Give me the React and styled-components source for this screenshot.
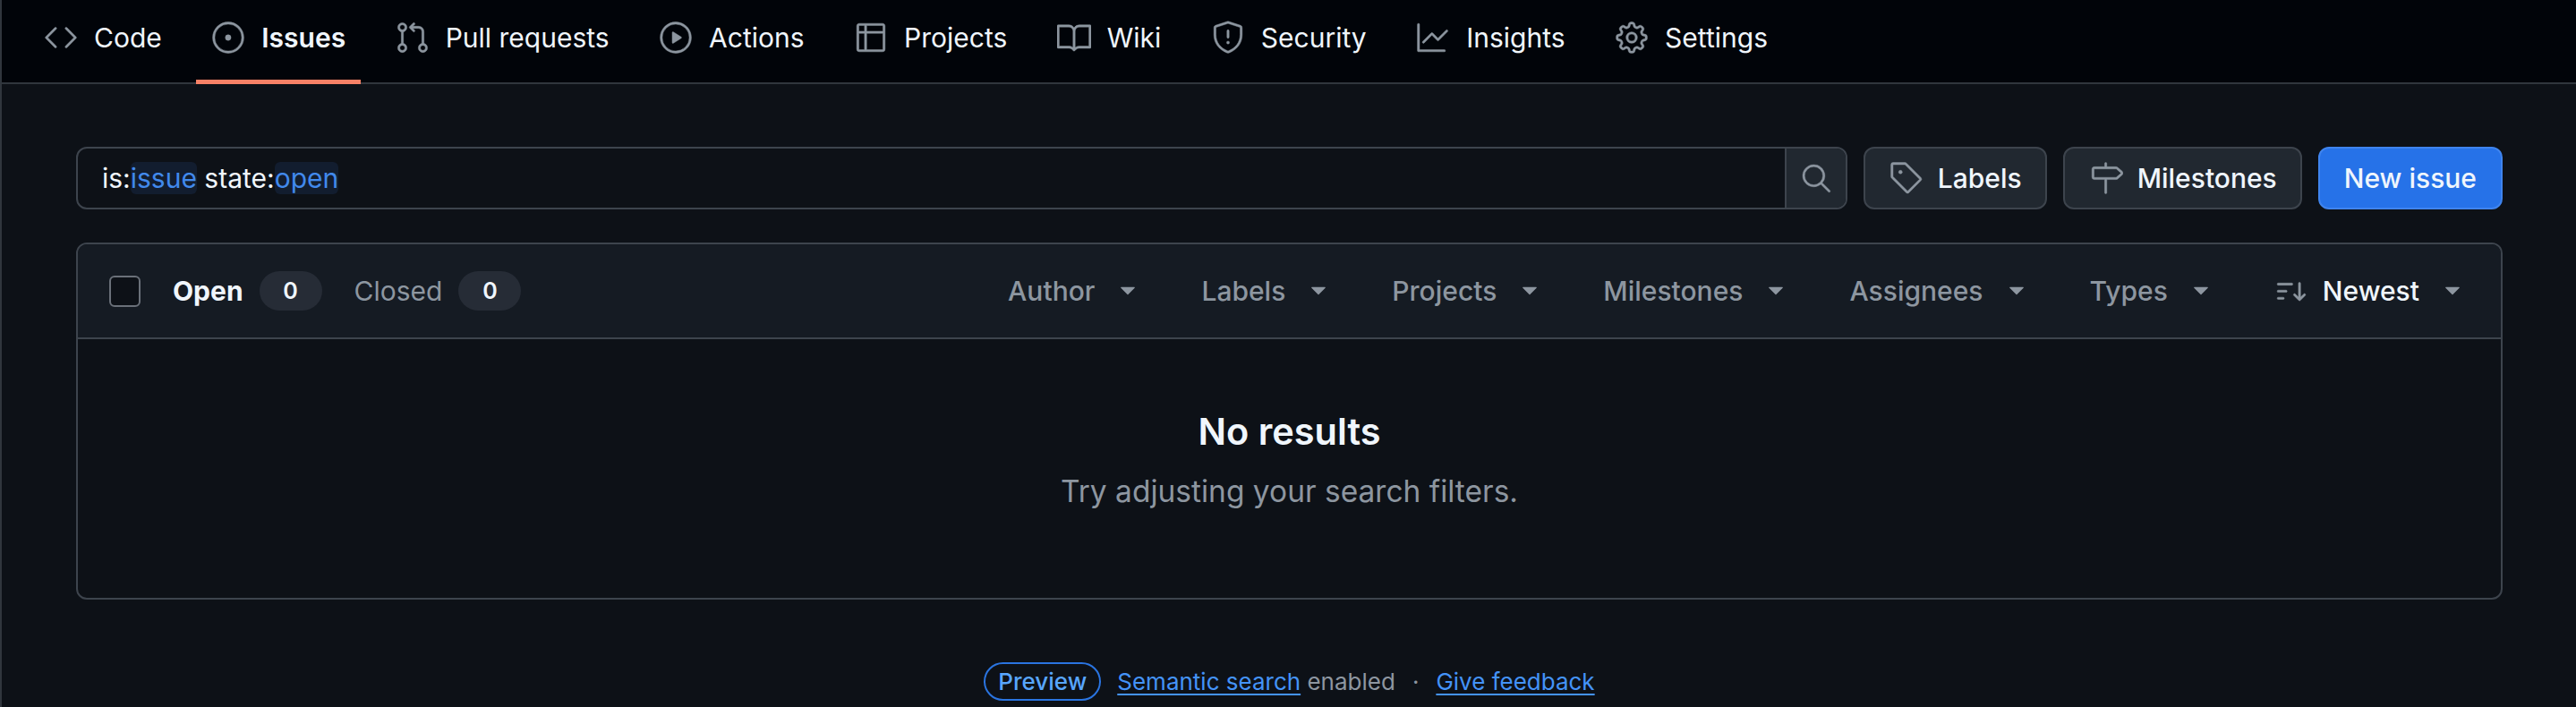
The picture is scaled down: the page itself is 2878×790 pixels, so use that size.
import React from 'react';
import styled, { createGlobalStyle } from 'styled-components';
import {
  GoCode, GoIssueOpened, GoGitPullRequest, GoPlay, GoTable, GoBook, GoShield,
  GoGraph, GoGear, GoSearch, GoTag, GoMilestone, GoSortDesc, GoTriangleDown,
} from 'react-icons/go';

const GlobalStyle = createGlobalStyle`
  html, body {
    margin: 0;
    background: #0d1117;
    color: #f0f6fc;
    font-family: Inter, "Noto Sans", sans-serif;
  }
  * { box-sizing: border-box; }
  svg {
    stroke: currentColor;
    stroke-width: 0.3;
  }
`;

const Page = styled.div`
  height: 790px;
  overflow: hidden;
  border-left: 2px solid #30363d;
`;

const Nav = styled.nav`
  display: flex;
  gap: 21.5px;
  height: 94px;
  padding-left: 30px;
  background: #010409;
  border-bottom: 2px solid #30363d;
`;

const Tab = styled.a`
  display: flex;
  align-items: center;
  gap: 18px;
  height: 94px;
  padding: 0 17px 5px;
  font-size: 30px;
  font-weight: ${p => (p.$active ? 600 : 400)};
  color: #f0f6fc;
  border-bottom: 5px solid ${p => (p.$active ? '#f78166' : 'transparent')};
  svg { color: #8d96a0; flex: none; }
`;

const Main = styled.main`
  padding: 70px 82px 0 83px;
`;

const SearchRow = styled.div`
  display: flex;
  gap: 18px;
  height: 70px;
`;

const SearchBar = styled.div`
  flex: 1;
  display: flex;
  border: 2px solid #3d444d;
  border-radius: 12px;
  overflow: hidden;
  background: #0d1117;
`;

const Query = styled.div`
  flex: 1;
  display: flex;
  align-items: center;
  padding-left: 27px;
  font-size: 30px;
  white-space: pre;
`;

const Token = styled.span`
  color: #4189ec;
  background: #121d2f;
  border-radius: 6px;
  height: 36px;
  line-height: 36px;
`;

const SearchButton = styled.div`
  width: 68px;
  display: flex;
  align-items: center;
  justify-content: center;
  background: #212830;
  border-left: 2px solid #3d444d;
  color: #8d96a0;
`;

const Button = styled.button`
  display: flex;
  align-items: center;
  gap: 16px;
  height: 70px;
  padding: ${p => (p.$primary ? '0 27px' : '0 26px 0 27px')};
  border: 2px solid ${p => (p.$primary ? '#3f84ee' : '#3d444d')};
  border-radius: 12px;
  background: ${p => (p.$primary ? '#2672e8' : '#212830')};
  color: #f0f6fc;
  font-family: inherit;
  font-size: 30px;
  font-weight: 500;
  svg { color: #8d96a0; }
`;

const Box = styled.section`
  margin-top: 37px;
  height: 399px;
  border: 2px solid #3d444d;
  border-radius: 12px;
  overflow: hidden;
  display: flex;
  flex-direction: column;
`;

const BoxHeader = styled.header`
  display: flex;
  align-items: center;
  height: 106px;
  padding: 0 39px 0 35px;
  flex: none;
  background: #151b23;
  border-bottom: 2px solid #3d444d;
`;

const Checkbox = styled.span`
  width: 35px;
  height: 35px;
  border: 2px solid #6a7079;
  border-radius: 6px;
  background: #0d1117;
  margin-right: 36px;
`;

const StateTab = styled.span`
  display: flex;
  align-items: center;
  gap: 18px;
  margin-right: 36px;
  font-size: 30px;
  font-weight: ${p => (p.$active ? 700 : 400)};
  color: ${p => (p.$active ? '#f0f6fc' : '#8d96a0')};
`;

const Count = styled.span`
  width: 70px;
  height: 44px;
  border-radius: 22px;
  background: #262c36;
  color: #f0f6fc;
  display: flex;
  align-items: center;
  justify-content: center;
  font-size: 25px;
  font-weight: 600;
`;

const Filters = styled.div`
  margin-left: auto;
  display: flex;
  align-items: center;
  gap: 67px;
`;

const Filter = styled.span`
  display: flex;
  align-items: center;
  gap: 22px;
  font-size: 30px;
  font-weight: 500;
  color: ${p => (p.$active ? '#f0f6fc' : '#8d96a0')};
  svg { color: #8d96a0; flex: none; stroke: none; }
`;

const SortLabel = styled.span`
  display: flex;
  align-items: center;
  gap: 16px;
  svg { stroke: currentColor; }
`;

const Empty = styled.div`
  flex: 1;
  display: flex;
  flex-direction: column;
  align-items: center;
  padding-top: 78px;
`;

const EmptyTitle = styled.h2`
  margin: 0;
  font-size: 41.5px;
  line-height: 50px;
  font-weight: 600;
`;

const EmptyText = styled.p`
  margin: 22px 0 0;
  font-size: 33.5px;
  line-height: 40px;
  color: #8d96a0;
`;

const Footer = styled.footer`
  margin-top: 70px;
  display: flex;
  justify-content: center;
  align-items: center;
  font-size: 26px;
  color: #8d96a0;
  white-space: pre;
`;

const Pill = styled.span`
  height: 43px;
  padding: 0 14px;
  display: flex;
  align-items: center;
  border: 2px solid #2a74e0;
  border-radius: 22px;
  color: #58a6ff;
  font-weight: 500;
  margin-right: 18px;
`;

const FooterLink = styled.a`
  color: #4493f8;
  text-decoration: underline;
  text-underline-offset: 4px;
`;

const Dot = styled.span`
  margin: 0 19px;
`;

const tabs = [
  ['Code', GoCode],
  ['Issues', GoIssueOpened, true],
  ['Pull requests', GoGitPullRequest],
  ['Actions', GoPlay],
  ['Projects', GoTable],
  ['Wiki', GoBook],
  ['Security', GoShield],
  ['Insights', GoGraph],
  ['Settings', GoGear],
];

const filters = ['Author', 'Labels', 'Projects', 'Milestones', 'Assignees', 'Types'];

export default function App() {
  return (
    <Page>
      <GlobalStyle />
      <Nav>
        {tabs.map(([label, Icon, active]) => (
          <Tab key={label} $active={active}>
            <Icon size={38} />
            {label}
          </Tab>
        ))}
      </Nav>
      <Main>
        <SearchRow>
          <SearchBar>
            <Query>
              is:<Token>issue</Token> state:<Token>open</Token>
            </Query>
            <SearchButton>
              <GoSearch size={36} />
            </SearchButton>
          </SearchBar>
          <Button><GoTag size={38} />Labels</Button>
          <Button><GoMilestone size={38} />Milestones</Button>
          <Button $primary>New issue</Button>
        </SearchRow>
        <Box>
          <BoxHeader>
            <Checkbox />
            <StateTab $active>Open <Count>0</Count></StateTab>
            <StateTab>Closed <Count>0</Count></StateTab>
            <Filters>
              {filters.map(label => (
                <Filter key={label}>
                  {label}
                  <GoTriangleDown size={30} />
                </Filter>
              ))}
              <Filter $active>
                <SortLabel><GoSortDesc size={38} />Newest</SortLabel>
                <GoTriangleDown size={30} />
              </Filter>
            </Filters>
          </BoxHeader>
          <Empty>
            <EmptyTitle>No results</EmptyTitle>
            <EmptyText>Try adjusting your search filters.</EmptyText>
          </Empty>
        </Box>
        <Footer>
          <Pill>Preview</Pill>
          <FooterLink>Semantic search</FooterLink> enabled<Dot>·</Dot>
          <FooterLink>Give feedback</FooterLink>
        </Footer>
      </Main>
    </Page>
  );
}
